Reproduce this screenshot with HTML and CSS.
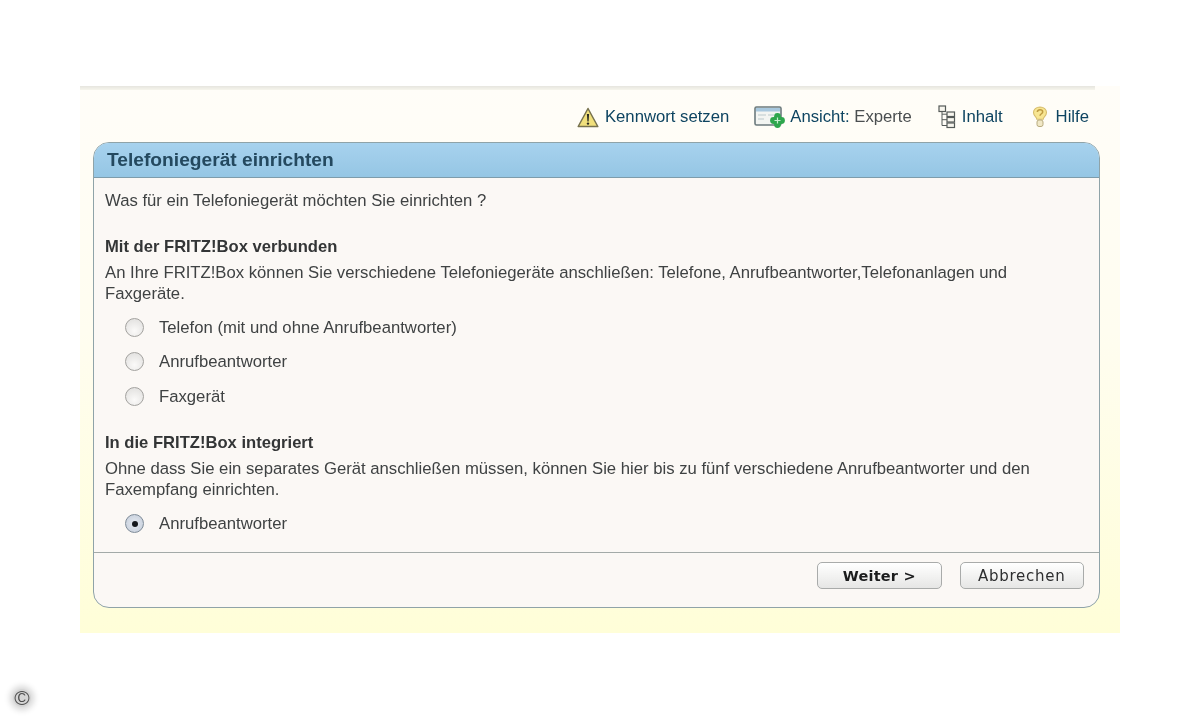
FILE: index.html
```html
<!DOCTYPE html>
<html lang="de">
<head>
<meta charset="utf-8">
<title>Telefoniegerät einrichten</title>
<link rel="stylesheet" href="styles.css">
</head>
<body>
<main class="shell">
  <div class="topline"></div>
  <nav class="toolbar">
    <a class="tool tool-pw">
      <svg width="22" height="21" viewBox="0 0 22 21"><path d="M11 1.500 L20.800 19.500 H1.200 Z" fill="#f1e07c" stroke="#77724e" stroke-width="1.500" stroke-linejoin="round"/><path d="M9.900 7h2.200l-.5 7.500h-1.200z" fill="#2a2a22"/><circle cx="11" cy="16.600" r="1.200" fill="#2a2a22"/></svg>
      <span>Kennwort setzen</span>
    </a>
    <a class="tool tool-view">
      <svg width="31" height="23" viewBox="0 0 31 23"><rect x="1" y="1" width="26" height="18" rx="1.500" fill="#f3f5f2" stroke="#6c7a7d" stroke-width="1.600"/><rect x="2" y="2" width="24" height="3.500" fill="#a8c8de"/><path d="M4 9h8M14 9h6M4 13h6" stroke="#bcc9cb" stroke-width="1.200"/><g fill="#2ea64d"><circle cx="23.500" cy="10.500" r="3.400"/><circle cx="23.500" cy="18.500" r="3.400"/><circle cx="19.500" cy="14.500" r="3.400"/><circle cx="27.500" cy="14.500" r="3.400"/><rect x="20" y="11" width="7" height="7"/></g><path d="M23.500 11.500v6M20.500 14.500h6" stroke="#c9efd0" stroke-width="1.200"/></svg>
      <span class="view-label"><span>Ansicht:</span> <span class="muted">Experte</span></span>
    </a>
    <a class="tool tool-toc">
      <svg width="18" height="24" viewBox="0 0 18 24"><g fill="#f7f5ee" stroke="#555a58" stroke-width="1.200"><rect x="1" y="1" width="6.500" height="5.500"/><rect x="9" y="7" width="7.500" height="4.500"/><rect x="9" y="12.500" width="7.500" height="4.500"/><rect x="9" y="18" width="7.500" height="4.500"/></g><path d="M4 6.500v14h5M4 9.200h5M4 14.700h5" fill="none" stroke="#555a58" stroke-width="1"/></svg>
      <span>Inhalt</span>
    </a>
    <a class="tool tool-help">
      <svg width="16" height="23" viewBox="0 0 16 23"><path d="M8 1c-3.800 0-6.500 2.400-6.500 5.500 0 2.200 1.100 3.300 2.100 4.300.8.800 1.200 1.500 1.200 2.500h6.400c0-1 .4-1.700 1.200-2.500 1-1 2.100-2.100 2.100-4.300C14.500 3.400 11.800 1 8 1z" fill="#f8e692" stroke="#d6bd6e" stroke-width="1.100"/><path d="M5.300 6c.2-1.400 1.300-2.200 2.700-2.200 1.600 0 2.700.9 2.700 2.100 0 1.800-2.700 1.900-2.700 3.900" fill="none" stroke="#c09c42" stroke-width="1.500"/><rect x="5" y="14" width="6" height="6.500" rx="2" fill="#f1e8c6" stroke="#b8ab7e"/></svg>
      <span>Hilfe</span>
    </a>
  </nav>
  <section class="dialog">
    <h1 class="dialog-title">Telefoniegerät einrichten</h1>
    <div class="dialog-body">
      <p class="question">Was für ein Telefoniegerät möchten Sie einrichten ?</p>
      <h2 class="group-title">Mit der FRITZ!Box verbunden</h2>
      <p class="group-text">An Ihre FRITZ!Box können Sie verschiedene Telefoniegeräte anschließen: Telefone, Anrufbeantworter,Telefonanlagen und Faxgeräte.</p>
      <ul class="options">
        <li class="option"><span class="radio"></span>Telefon (mit und ohne Anrufbeantworter)</li>
        <li class="option"><span class="radio"></span>Anrufbeantworter</li>
        <li class="option"><span class="radio"></span>Faxgerät</li>
      </ul>
      <h2 class="group-title group-second">In die FRITZ!Box integriert</h2>
      <p class="group-text">Ohne dass Sie ein separates Gerät anschließen müssen, können Sie hier bis zu fünf verschiedene Anrufbeantworter und den Faxempfang einrichten.</p>
      <ul class="options options-last">
        <li class="option"><span class="radio radio-on"></span>Anrufbeantworter</li>
      </ul>
    </div>
    <footer class="dialog-footer">
      <button class="btn btn-primary" type="button">Weiter &gt;</button>
      <button class="btn" type="button">Abbrechen</button>
    </footer>
  </section>
</main>
<div class="copyright">©</div>
</body>
</html>
```
FILE: styles.css
```css
* { box-sizing: border-box; }
html, body { margin: 0; height: 720px; overflow: hidden; background: #fff; }
body {
  padding: 86px 0 0 0;
  font-family: "Liberation Sans", Arial, sans-serif;
  color: #3f4243;
  filter: blur(.4px);
}
.shell {
  width: 1040px;
  height: 547px;
  margin-left: 80px;
  padding: 0 20px 0 13px;
  background: linear-gradient(#fffdf8 0%, #fffdf0 45%, #fffed8 100%);
}
.topline {
  height: 4px;
  margin: 0 5px 0 -13px;
  background: linear-gradient(#e6e5df, #f6f5ec);
}
.toolbar {
  height: 52px;
  display: flex;
  justify-content: flex-end;
  align-items: center;
  padding: 2px 11px 0 0;
  font-size: 16.700px;
  color: #0e4461;
}
.tool { display: flex; align-items: center; }
.tool-pw { gap: 6px; margin-right: 25px; }
.tool-view { gap: 5px; margin-right: 26px; }
.tool-toc { gap: 6px; margin-right: 29px; }
.tool-help { gap: 8px; }
.muted { color: #4a4e50; }
.dialog {
  height: 466px;
  border: 1px solid #8fa3a8;
  border-radius: 16px;
  background: #fbf8f5;
  display: flex;
  flex-direction: column;
  overflow: hidden;
}
.dialog-title {
  margin: 0;
  height: 35px;
  padding: 0 13px;
  display: flex;
  align-items: center;
  font-size: 19.200px;
  font-weight: bold;
  color: #24495f;
  background: linear-gradient(#a7d2ee, #95c6e4);
  border-bottom: 1px solid #7d9cab;
}
.dialog-body {
  flex: 1;
  padding: 12px 30px 0 11px;
  font-size: 16.700px;
  line-height: 21px;
}
.dialog-body p { margin: 0; }
.question { margin-bottom: 25px !important; }
.group-title { margin: 0 0 5px; font-size: 16.600px; line-height: 21px; font-weight: bold; color: #333536; }
.group-second { margin-top: 18px; }
.options { list-style: none; margin: 6px 0 0; padding: 0 0 0 20px; }
.options-last { margin-top: 7px; }
.option { display: flex; align-items: center; height: 34.500px; gap: 15px; }
.radio {
  width: 19px;
  height: 19px;
  border-radius: 50%;
  border: 1.500px solid #a3a29f;
  background: radial-gradient(circle at 50% 70%, #fbfaf9, #dedddb);
  display: flex;
  align-items: center;
  justify-content: center;
}
.radio-on { border-color: #7f8c99; background: radial-gradient(circle, #e6ebf2, #c2cbd8); }
.radio-on::after { content: ""; width: 6px; height: 6px; border-radius: 50%; background: #15181c; }
.dialog-footer {
  height: 55px;
  border-top: 1px solid #a3aaa8;
  display: flex;
  justify-content: flex-end;
  align-items: flex-start;
  gap: 18px;
  padding: 9px 15px 0 0;
}
.btn {
  width: 124.500px;
  height: 27px;
  padding: 0;
  border: 1px solid #a9abaa;
  border-radius: 5px;
  background: linear-gradient(#fff 0%, #f4f4f3 45%, #e6e6e5 100%);
  font-family: "DejaVu Sans", sans-serif;
  font-size: 15px;
  letter-spacing: .75px;
  color: #2d2e2f;
}
.btn-primary { font-weight: bold; color: #1b1c1d; font-size: 14.500px; letter-spacing: .2px; }
.copyright {
  margin: 56px 0 0 13px;
  width: 18px;
  height: 18px;
  border-radius: 50%;
  background: #d5d5d5;
  box-shadow: 0 0 6px 3px #d6d6d6;
  color: #4e4e4e;
  font-size: 21px;
  line-height: 18px;
  text-align: center;
}
```
